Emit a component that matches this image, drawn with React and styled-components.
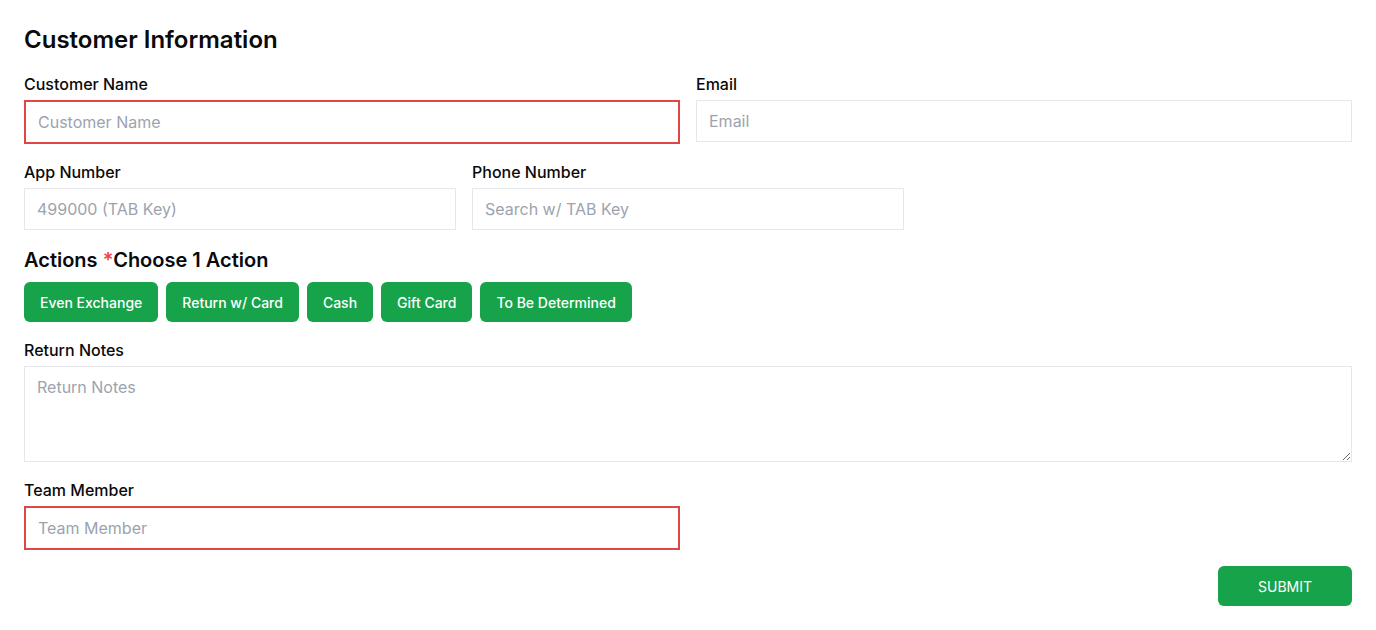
import React from "react";
import styled, { createGlobalStyle } from "styled-components";

const Global = createGlobalStyle`
  * { box-sizing: border-box; }
  body { margin: 0; background: #fff; font-family: Inter, "Noto Sans", sans-serif; color: #111; }
`;

const Page = styled.div`
  padding: 24px;
  display: flex;
  flex-direction: column;
`;

const Title = styled.h2`
  margin: 0 0 16px;
  font-size: 24px;
  line-height: 32px;
  font-weight: 600;
  color: #0a0a0a;
`;

const Grid = styled.div`
  display: grid;
  grid-template-columns: repeat(${(p) => p.cols}, 1fr);
  column-gap: 16px;
  margin-bottom: 16px;
`;

const Field = styled.div`
  display: flex;
  flex-direction: column;
  gap: 4px;
`;

const Label = styled.label`
  font-size: 16px;
  line-height: 24px;
  font-weight: 500;
  color: #0a0a0a;
`;

const Input = styled.input`
  font-family: inherit;
  font-size: 16px;
  height: ${(p) => (p.$error ? "44px" : "42px")};
  padding: 0 12px;
  border: ${(p) => (p.$error ? "2px solid #e04646" : "1px solid #e5e7eb")};
  border-radius: 0;
  outline: none;
  width: 100%;
  color: #111;
  &::placeholder { color: #9ca3af; }
`;

const TextArea = styled.textarea`
  font-family: inherit;
  font-size: 16px;
  height: 96px;
  padding: 10px 12px;
  border: 1px solid #e5e7eb;
  border-radius: 0;
  outline: none;
  width: 100%;
  resize: vertical;
  display: block;
  &::placeholder { color: #9ca3af; }
`;

const SectionTitle = styled.h3`
  margin: 0 0 8px;
  font-size: 20px;
  line-height: 28px;
  font-weight: 600;
  color: #0a0a0a;
`;

const Star = styled.span`
  color: #ef4444;
`;

const ButtonRow = styled.div`
  display: flex;
  gap: 8px;
  margin-bottom: 16px;
`;

const ActionButton = styled.button`
  font-family: inherit;
  height: 40px;
  padding: 0 16px;
  background: #16a34a;
  color: #fff;
  border: none;
  border-radius: 6px;
  font-size: 14px;
  font-weight: 500;
  cursor: pointer;
`;

const Block = styled.div`
  margin-bottom: 16px;
`;

const Footer = styled.div`
  display: flex;
  justify-content: flex-end;
`;

const SubmitButton = styled.button`
  font-family: inherit;
  width: 134px;
  height: 40px;
  background: #16a34a;
  color: #fff;
  border: none;
  border-radius: 6px;
  font-size: 14px;
  font-weight: 400;
  cursor: pointer;
`;

const actions = ["Even Exchange", "Return w/ Card", "Cash", "Gift Card", "To Be Determined"];

export default function App() {
  return (
    <>
      <Global />
      <Page>
        <Title>Customer Information</Title>
        <Grid cols={2}>
          <Field>
            <Label>Customer Name</Label>
            <Input $error placeholder="Customer Name" />
          </Field>
          <Field>
            <Label>Email</Label>
            <Input placeholder="Email" />
          </Field>
        </Grid>
        <Grid cols={3}>
          <Field>
            <Label>App Number</Label>
            <Input placeholder="499000 (TAB Key)" />
          </Field>
          <Field>
            <Label>Phone Number</Label>
            <Input placeholder="Search w/ TAB Key" />
          </Field>
        </Grid>
        <SectionTitle>
          Actions <Star>*</Star>Choose 1 Action
        </SectionTitle>
        <ButtonRow>
          {actions.map((a) => (
            <ActionButton key={a}>{a}</ActionButton>
          ))}
        </ButtonRow>
        <Block>
          <Field>
            <Label>Return Notes</Label>
            <TextArea placeholder="Return Notes" />
          </Field>
        </Block>
        <Grid cols={2}>
          <Field>
            <Label>Team Member</Label>
            <Input $error placeholder="Team Member" />
          </Field>
        </Grid>
        <Footer>
          <SubmitButton>SUBMIT</SubmitButton>
        </Footer>
      </Page>
    </>
  );
}
